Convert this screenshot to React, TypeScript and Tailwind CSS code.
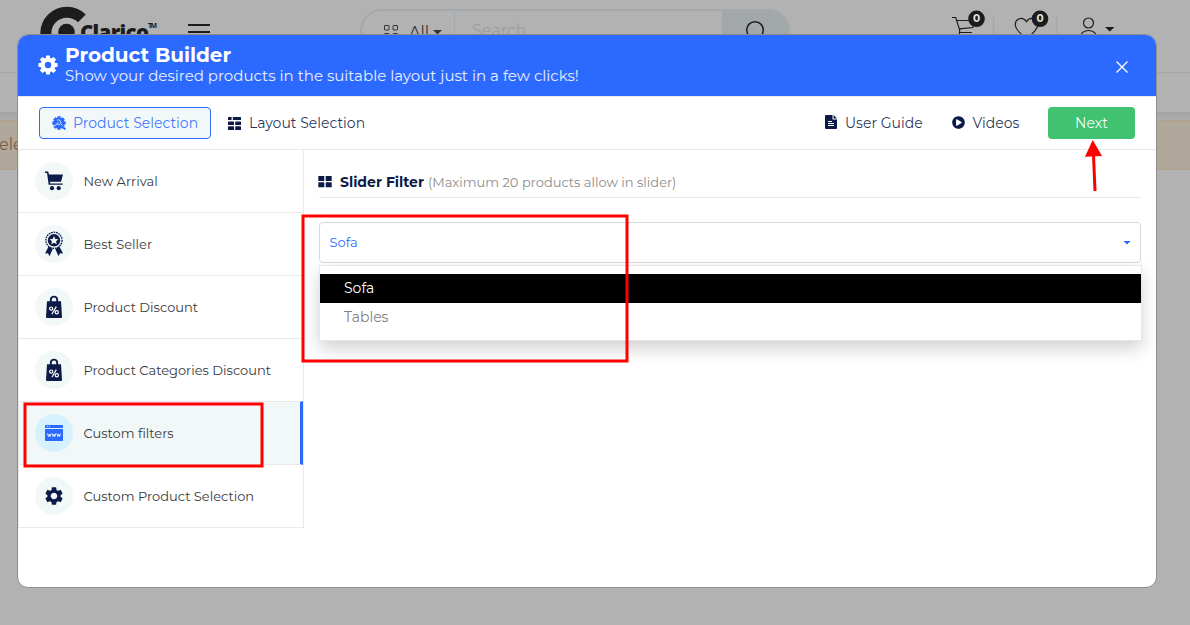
import React from "react";
import { MdSettings } from "react-icons/md";
import { FaPlayCircle } from "react-icons/fa";

const CartSolid = () => (
  <svg width="20" height="20" viewBox="0 0 20 20" fill="#0c1a47">
    <path d="M1 .6h3.200L5 3.500h14l-2 7.200H6L6.300 12.500H18.700v1.200H4.700L3 2H1z" />
    <circle cx="8" cy="17.200" r="2.100" />
    <circle cx="14.700" cy="17.200" r="2.100" />
  </svg>
);

const Award = () => (
  <svg width="20" height="26" viewBox="0 0 20 26" fill="#0c1a47">
    <path d="M4.600 15.500 1 22.600l3-.4 1.500 3L8.700 18zM15.400 15.500l3.600 7.100-3-.4-1.500 3L11.300 18z" />
    <circle cx="10" cy="9.300" r="8.100" fill="none" stroke="#0c1a47" strokeWidth="1.300" strokeDasharray="1.700 .8" />
    <circle cx="10" cy="9.300" r="6.200" />
    <path fill="#f2f8f8" d="m10 5 1.300 2.900 3.100.3-2.300 2.100.6 3-2.700-1.500-2.700 1.500.6-3-2.300-2.100 3.100-.3z" />
  </svg>
);

const Bag = () => (
  <svg width="18" height="24" viewBox="0 0 18 24">
    <path d="M5.800 7V4.800a3.200 3.200 0 0 1 6.400 0V7" fill="none" stroke="#0c1a47" strokeWidth="1.900" />
    <path d="M2 6.200h14l1 15.800q0 1-1 1H2q-1 0-1-1z" fill="#0c1a47" />
    <g fill="none" stroke="#fff" strokeWidth="1.200">
      <circle cx="6.200" cy="13.600" r="1.600" />
      <circle cx="11.800" cy="17.200" r="1.600" />
      <path d="M11.300 11.600 6.900 19.200" />
    </g>
  </svg>
);

const Www = () => (
  <svg width="18" height="16" viewBox="0 0 18 16">
    <path d="M0 1q0-1 1-1h16q1 0 1 1v2H0z" fill="#2b69ff" />
    <path d="M0 4h18v11q0 1-1 1H1q-1 0-1-1z" fill="#2b69ff" />
    <path d="M2 1.500h1M4 1.500h1" stroke="#d5f1fe" />
    <path
      d="m2.500 8.500 1 3 .8-2.300.8 2.300 1-3M7.200 8.500l1 3L9 9.200l.8 2.300 1-3M11.900 8.500l1 3 .8-2.300.8 2.300 1-3"
      fill="none"
      stroke="#eaf8ff"
      strokeWidth=".95"
    />
  </svg>
);

const Gear = () => (
  <svg width="20" height="20" viewBox="-10 -10 20 20">
    <g fill="#fff">
      {[0, 45, 90, 135, 180, 225, 270, 315].map((a) => (
        <path key={a} transform={`rotate(${a})`} d="M-2.500-5.500-1.800-9.600h3.600l.7 4.100z" />
      ))}
    </g>
    <circle r="5.200" fill="none" stroke="#fff" strokeWidth="4" />
  </svg>
);

const GearSearch = () => (
  <svg width="14" height="14" viewBox="-7 -7 14 14">
    <g fill="#2b69ff">
      <circle r="5.500" />
      {[0, 45, 90, 135, 180, 225, 270, 315].map((a) => (
        <path key={a} transform={`rotate(${a})`} d="M-1.900-4.500-1.500-6.700h3l.4 2.200z" />
      ))}
    </g>
    <path d="M-1.800-2.800A2.400 2.400 0 1 1-2 1.200" fill="none" stroke="#f2f8f8" strokeWidth=".8" />
    <path d="M-5 3.500-.5-.8M1.800 1 6.800 5.500" stroke="#f2f8f8" strokeWidth=".9" />
    <path d="m2.500 2.800 3.800 3.600" stroke="#2b69ff" strokeWidth="2" />
  </svg>
);

const LayoutIcon = () => (
  <svg width="13" height="13" viewBox="0 0 13 13" fill="#0c1a47">
    <rect width="3.600" height="3" rx=".5" />
    <rect x="4.800" width="8.200" height="3" rx=".5" />
    <rect y="4.400" width="6" height="3.600" rx=".5" />
    <rect x="7.200" y="4.400" width="5.800" height="3.600" rx=".5" />
    <rect y="9.300" width="6" height="3.700" rx=".5" />
    <rect x="7.200" y="9.300" width="5.800" height="3.700" rx=".5" />
  </svg>
);

const FileIcon = () => (
  <svg className="-mt-[2px]" width="12" height="14" viewBox="0 0 12 14">
    <path d="M0 1q0-1 1-1h6.500v4.500H12V13q0 1-1 1H1q-1 0-1-1z" fill="#0c1a47" />
    <path d="M8.500 0 12 3.500H8.500z" fill="#0c1a47" />
    <path d="M3 6.500h4M3 8.500h6M3 10.500h6" stroke="#fff" />
  </svg>
);

const Caret = ({ className }: { className: string }) => (
  <svg className={className} width="9" height="5" viewBox="0 0 9 5">
    <path d="M0 0h9L4.500 4.500z" fill="currentColor" />
  </svg>
);

const items: { label: string; icon: React.ReactNode; active?: boolean }[] = [
  { label: "New Arrival", icon: <CartSolid /> },
  { label: "Best Seller", icon: <Award /> },
  { label: "Product Discount", icon: <Bag /> },
  { label: "Product Categories Discount", icon: <Bag /> },
  { label: "Custom filters", icon: <Www />, active: true },
  { label: "Custom Product Selection", icon: <MdSettings size={22} color="#0c1a47" /> },
];

function SiteHeader() {
  return (
    <div className="flex h-[73px] items-start border-b border-[#a5a6a7]">
      <svg className="ml-[36px] shrink-0" width="124" height="60" viewBox="36 0 124 60">
        <path d="M81.900 18.300A21.200 21.200 0 1 0 81.900 48.500" fill="none" stroke="#1c1c1c" strokeWidth="11" />
        <circle cx="66.500" cy="32" r="8.300" fill="#1c1c1c" />
        <text x="80" y="40" fontSize="20.500" fontWeight="800" fontFamily="Open Sans" fill="#1c1c1c" textLength="69">Clarico</text>
        <text x="148" y="28" fontSize="7" fontWeight="700" fontFamily="Open Sans" fill="#1c1c1c" textLength="9">TM</text>
      </svg>
      <div className="ml-7 mt-6 flex h-[17px] w-[22px] flex-col justify-between">
        <i className="h-[2px] bg-[#1c1c1c]" />
        <i className="-mt-px h-[2px] bg-[#1c1c1c]" />
        <i className="h-[2px] bg-[#1c1c1c]" />
      </div>
      <div className="ml-[150px] mt-[9px] flex h-[44px] w-[430px] overflow-hidden rounded-[22px] border-2 border-[#a3a8ac]">
        <div className="flex w-[93px] border-r border-[#a3a8ac] pl-[22px] pt-[13px] text-[#333]">
          <svg width="16" height="16" viewBox="0 0 16 16" fill="none" stroke="#333">
            <rect x=".5" y="1.500" width="4.500" height="4.500" rx=".5" />
            <rect x="9" y="1.500" width="4.500" height="4.500" rx=".5" />
            <rect x=".5" y="9.500" width="4.500" height="4.500" rx=".5" />
            <rect x="9" y="9.500" width="4.500" height="4.500" rx=".5" />
          </svg>
          <span className="ml-[9px] -mt-[3px] text-[16px] leading-6">All</span>
          <Caret className="ml-[4px] mt-[6px]" />
        </div>
        <span className="flex-1 pl-[17px] pt-[8px] text-[16px] leading-6 text-[#9c9d9e]">Search...</span>
        <div className="w-[66px] bg-[#a2a7aa] pl-[22px] pt-[8px]">
          <svg width="24" height="26" viewBox="0 0 24 26" fill="none" stroke="#1c1c1c" strokeWidth="1.500">
            <circle cx="11" cy="11" r="8.300" />
            <path d="m17 17 6 6" />
          </svg>
        </div>
      </div>
      <svg className="ml-[160px]" width="170" height="50" viewBox="950 0 170 50" fill="none" stroke="#1c1c1c" strokeWidth="1.200">
        <path d="M952 17.500h3.700l4 12.500-.5 6M957 20.500h18l-2.200 7-13.500 1.300M959.500 32.500h12.500" />
        <path d="M1026.500 21.700c-3.500-5.500-11.500-3.500-11.200 3.500.3 5 6 9 11.200 13.500 5.200-4.500 10.900-8.500 11.200-13.500.3-7-7.700-9-11.200-3.500z" />
        <path d="M993.500 17v23M1056.500 17v23" stroke="#a5a6a7" />
        <circle cx="1088.500" cy="23" r="5" />
        <path d="M1080 38c0-10 17-10 17 0" />
        <path d="M1105 27h9.500l-4.700 4.500z" fill="#1c1c1c" stroke="none" />
        <g stroke="none">
          <circle cx="976.500" cy="18.800" r="8.300" fill="#1c1c1c" />
          <circle cx="1040" cy="18.800" r="8.300" fill="#1c1c1c" />
          <g fill="#e4e4e4" fontSize="10.500" fontWeight="700" textAnchor="middle">
            <text x="976.500" y="22.300">0</text>
            <text x="1040" y="22.300">0</text>
          </g>
        </g>
      </svg>
    </div>
  );
}

export default function App() {
  return (
    <div className="relative h-[625px] w-[1190px] overflow-hidden bg-[#b2b2b2] font-['Montserrat','Inter',sans-serif]">
      <SiteHeader />
      <div className="h-[39px]" />
      <div className="h-2 bg-gradient-to-b from-[#a5a5a5] to-[#adadad]" />
      <div className="flex h-[50px] items-center border-y border-[#b5a08c] bg-[#b1a89c]">
        <span className="-ml-[1px] text-[16px] text-[#7a5c42]">ele</span>
      </div>

      <div className="absolute left-[17px] top-[34px] flex h-[554px] w-[1140px] flex-col overflow-hidden rounded-[11px] border border-[#8e8e8e] bg-white">
        <div className="flex h-[61px] shrink-0 bg-[#2b69ff] pl-[19.500px] text-white">
          <div className="mt-5"><Gear /></div>
          <div className="ml-[7.500px] flex flex-col whitespace-nowrap">
            <span className="mt-[8px] text-[20px] font-bold leading-6">Product Builder</span>
            <span className="text-[15px] leading-[18px] tracking-[0.015px] text-white/90">Show your desired products in the suitable layout just in a few clicks!</span>
          </div>
          <svg className="ml-auto mr-[28px] mt-[26px]" width="12" height="12" viewBox="0 0 12 12" stroke="#fff" strokeWidth="1.300">
            <path d="m.5.500 11 11M11.500.500l-11 11" />
          </svg>
        </div>

        <div className="flex h-[54px] shrink-0 items-center whitespace-nowrap border-y border-[#e9e9e9] pl-[21px] pr-[21px] text-[14px] text-[#0c1a47]/90">
          <div className="flex h-8 w-[172px] items-center rounded border border-[#2b69ff] bg-[#f2f8f8] pl-[12px] text-[#2b69ff]/90">
            <GearSearch />
            <span className="ml-[7px]">Product Selection</span>
          </div>
          <div className="ml-[17px] flex items-center">
            <LayoutIcon />
            <span className="ml-[8px]">Layout Selection</span>
          </div>
          <div className="ml-auto flex w-[127px] items-center">
            <FileIcon />
            <span className="ml-[8px]">User Guide</span>
          </div>
          <div className="flex w-[96px] items-center">
            <FaPlayCircle size={13} className="-mt-[2px] text-[#0c1a47]" />
            <span className="ml-[7.500px]">Videos</span>
          </div>
          <div className="flex h-8 w-[87px] items-center justify-center rounded bg-[#41c270] text-white/95">Next</div>
        </div>

        <div className="flex min-h-0 flex-1">
          <div className="h-[378px] w-[286px] shrink-0 border-x border-[#e9e9e9]">
            {items.map((it) => (
              <div
                key={it.label}
                className={
                  "flex items-center border-b border-[#e9e9e9] pl-4 " +
                  (it.active ? "-mt-px h-[64px] border-r-[3px] border-t border-r-[#2b69ff] bg-[#f2f8f8]" : "h-[63px]")
                }
              >
                <div className={"flex h-[38px] w-[38px] items-center justify-center rounded-full " + (it.active ? "bg-[#d5f1fe]" : "bg-[#f2f8f8]")}>
                  {it.icon}
                </div>
                <span className="ml-[10.500px] mt-px whitespace-nowrap text-[13px] text-[#383b3e]">{it.label}</span>
              </div>
            ))}
          </div>

          <div className="flex-1 pl-[15px] pr-[15px] pt-[22px]">
            <div className="mr-px flex h-[26px] items-center whitespace-nowrap border-b border-[#e9e9e9] pb-[5px]">
              <svg className="-ml-px" width="14" height="12" viewBox="0 0 14 12" fill="#0c1a47">
                <rect x=".3" width="6" height="5" rx=".6" />
                <rect x="7.700" width="6" height="5" rx=".6" />
                <rect x=".3" y="6.300" width="6" height="5" rx=".6" />
                <rect x="7.700" y="6.300" width="6" height="5" rx=".6" />
              </svg>
              <span className="ml-[8px] mt-px text-[14px] font-bold text-[#0c1a47]">Slider Filter</span>
              <span className="ml-1 mt-[2px] text-[13px] text-[#8c8c8c]">(Maximum 20 products allow in slider)</span>
            </div>
            <div className="mr-px mt-6 flex h-[41px] items-center justify-between rounded border border-[#d8d8d8] pl-[9.500px] pr-[9px] text-[#2b69ff]">
              <span className="text-[13px]">Sofa</span>
              <Caret className="mt-px h-[4px] w-[8px]" />
            </div>
            <div className="relative mt-[2px] h-[76px] w-[823px] border border-[#e6e6e6] bg-white pt-2 text-[14px] shadow-[0_8px_16px_rgba(0,0,0,0.175)]">
              <div className="h-[29px] bg-black pl-6 leading-[28px] text-white">Sofa</div>
              <div className="h-[29px] pl-6 leading-[28px] text-[#808080]">Tables</div>
            </div>
          </div>
        </div>
      </div>

      <svg className="pointer-events-none absolute inset-0" width="1190" height="625" fill="none" stroke="#f00" strokeWidth="3">
        <rect x="303" y="216" width="324" height="145" />
        <rect x="25" y="404" width="237" height="62" />
        <path d="m1093.500 155 1.500 36" />
        <path d="m1092.700 140 9.300 16-17 .8z" fill="#f00" stroke="none" />
      </svg>
    </div>
  );
}
